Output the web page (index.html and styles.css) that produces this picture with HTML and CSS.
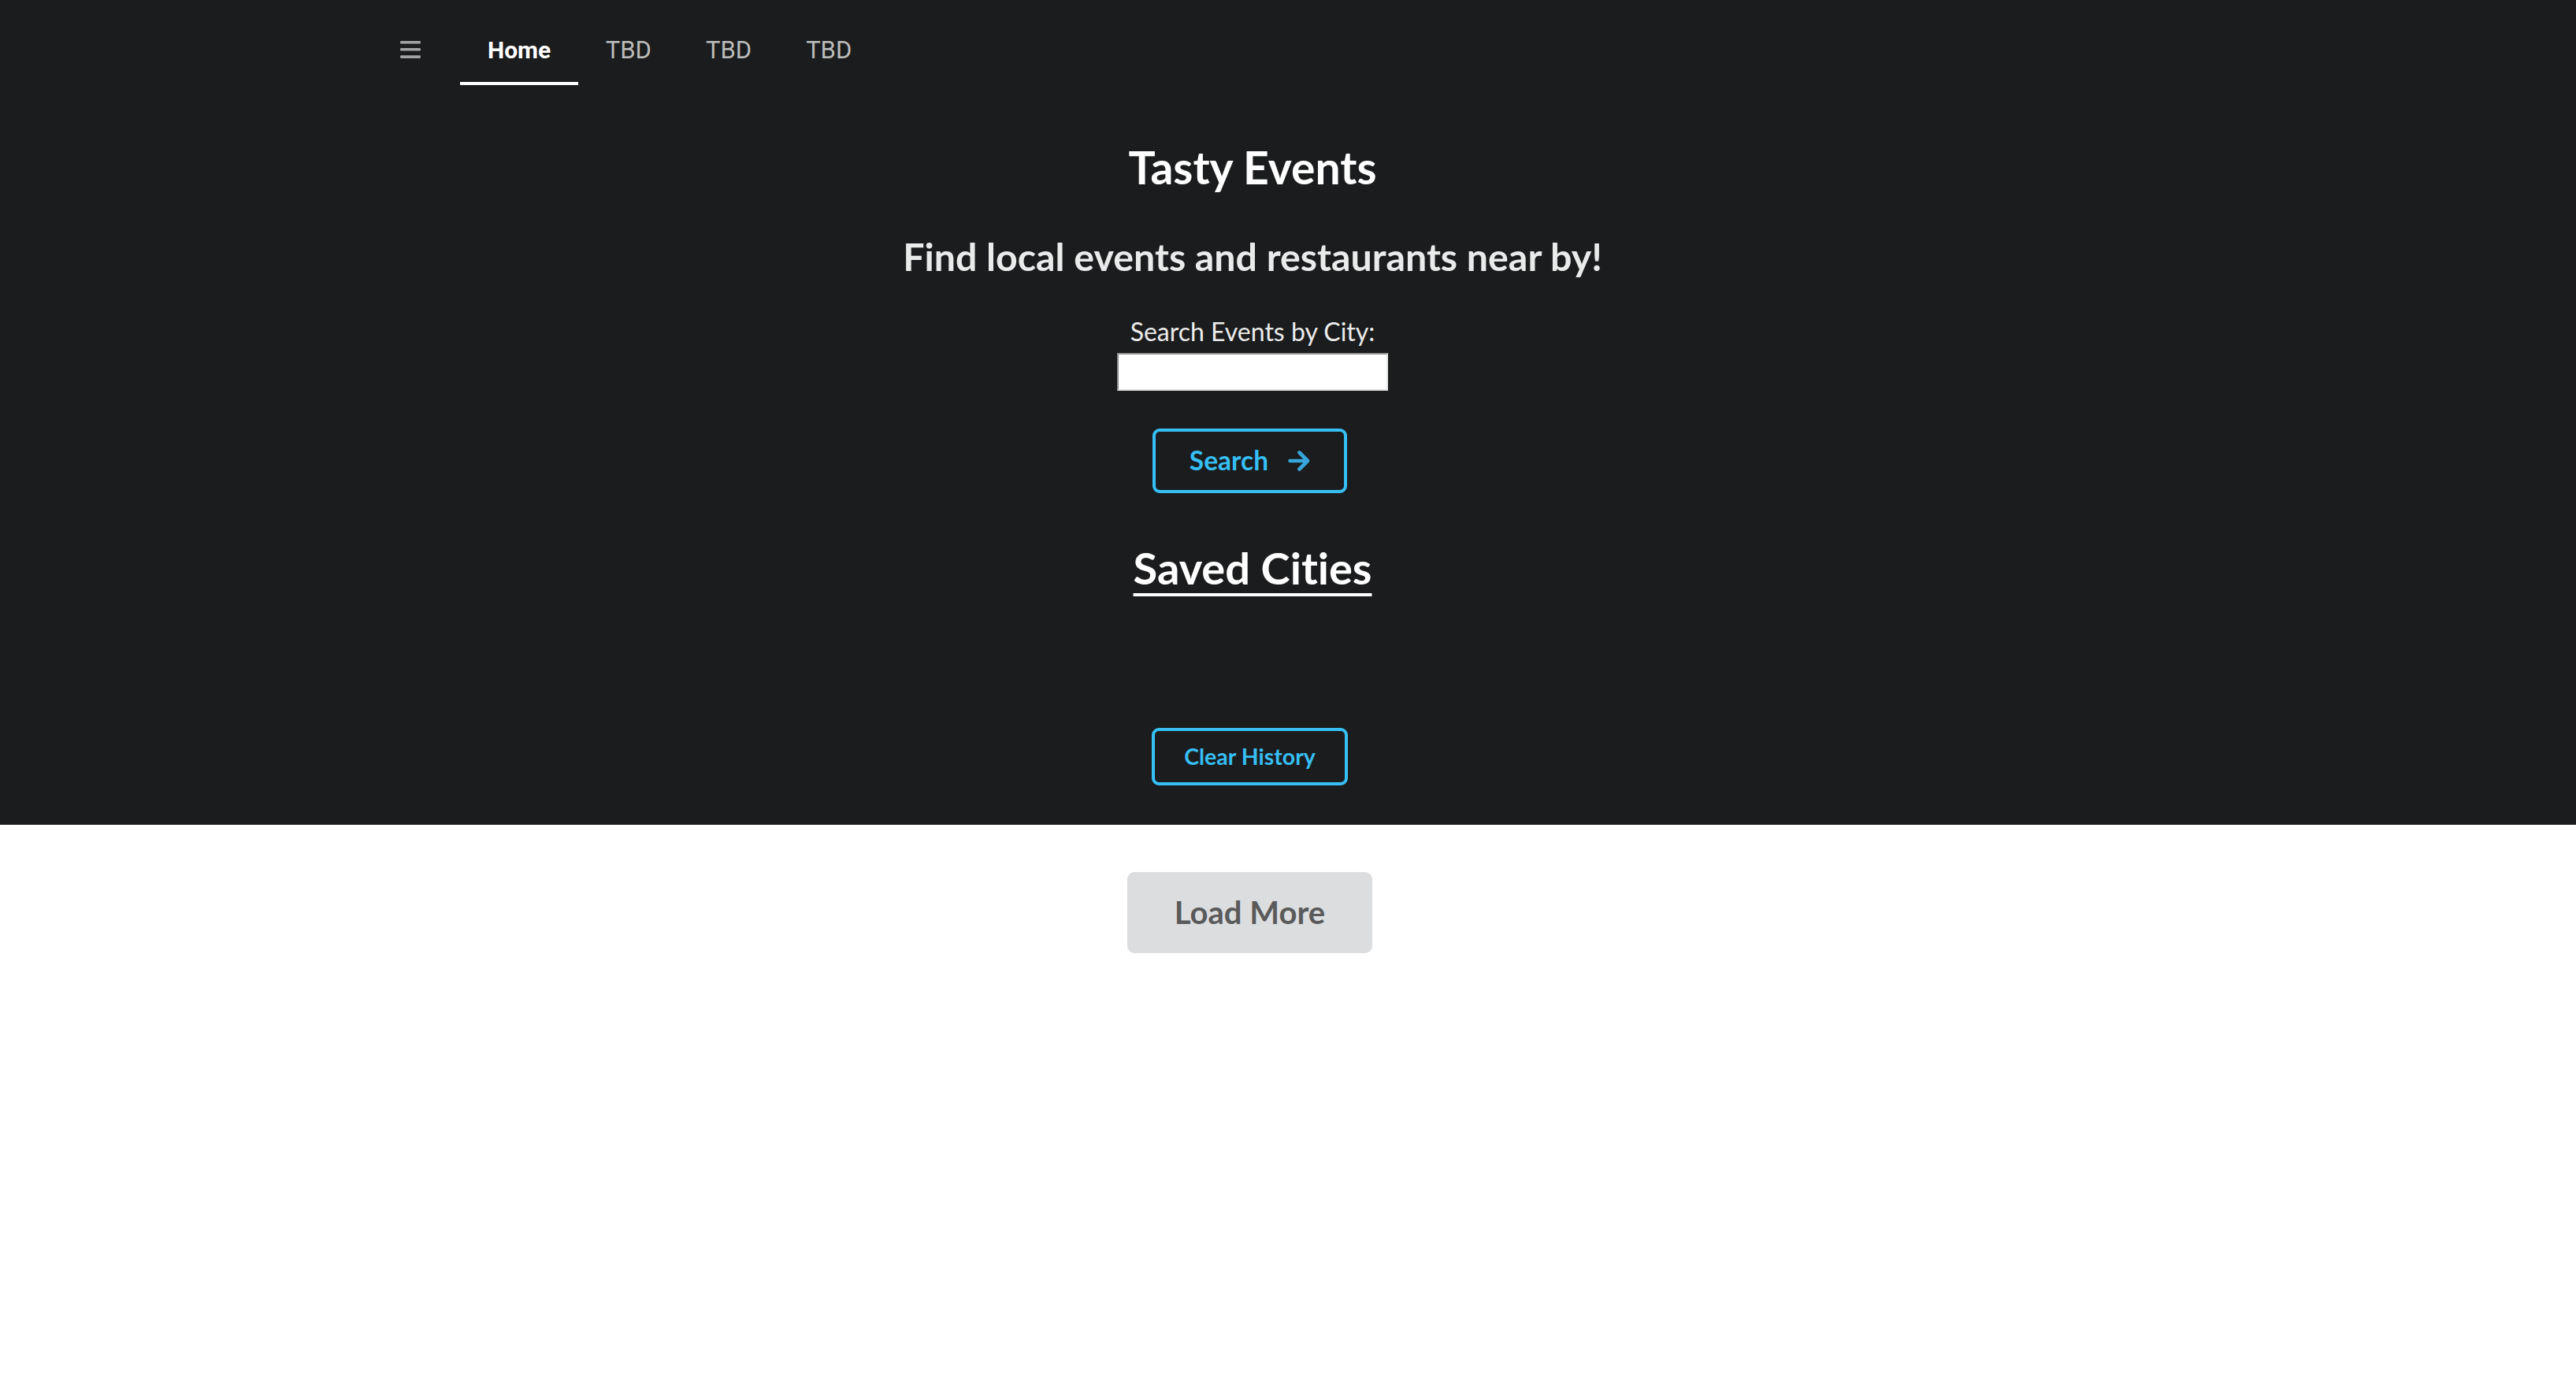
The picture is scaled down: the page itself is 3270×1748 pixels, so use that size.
FILE: index.html
```html
<!DOCTYPE html>
<html lang="en">
<head>
<meta charset="utf-8">
<title>Tasty Events</title>
<link rel="stylesheet" href="styles.css">
</head>
<body>
<section class="hero">
  <div class="hero-inner">
    <nav class="menu">
      <div class="menu-toggle" aria-label="menu">
        <svg width="26" height="22" viewBox="0 0 26 22">
          <rect x="0" y="0" width="26" height="3.6" rx="1.4" fill="#a3a3a3"/>
          <rect x="0" y="9" width="26" height="3.6" rx="1.4" fill="#a3a3a3"/>
          <rect x="0" y="18.2" width="26" height="3.8" rx="1.4" fill="#a3a3a3"/>
        </svg>
      </div>
      <a class="tab active">Home</a>
      <a class="tab">TBD</a>
      <a class="tab">TBD</a>
      <a class="tab">TBD</a>
    </nav>
    <div class="content">
      <h1 class="title">Tasty Events</h1>
      <h2 class="subtitle">Find local events and restaurants near by!</h2>
      <label class="label" for="city">Search Events by City:</label>
      <div class="field"><input id="city" class="city-input" type="text"></div>
      <div class="row search-row">
        <button class="btn-outline btn-search">Search
          <svg class="arrow" width="28" height="26" viewBox="0 0 28 26">
            <path d="M2.5 13 H25 M14.5 2.5 L25 13 L14.5 23.5" fill="none" stroke="#36a6dc" stroke-width="4.6" stroke-linecap="round" stroke-linejoin="round"/>
          </svg>
        </button>
      </div>
      <h3 class="saved">Saved Cities</h3>
      <div class="row clear-row">
        <button class="btn-outline btn-clear">Clear History</button>
      </div>
    </div>
  </div>
</section>
<section class="below">
  <div class="below-inner">
    <button class="btn-load">Load More</button>
  </div>
</section>
</body>
</html>
```

FILE: styles.css
```css
html, body {
  margin: 0;
  padding: 0;
  background: #ffffff;
}

body {
  font-family: Lato, "Open Sans", sans-serif;
  font-variant-ligatures: none;
}

.hero {
  background: #1b1c1d;
  padding-bottom: 50px;
}

.hero-inner {
  padding-right: 90px;
}

.menu {
  width: 2254px;
  margin: 0 auto;
  display: flex;
  align-items: flex-start;
  height: 108px;
  font-family: Roboto, "Liberation Sans", sans-serif;
}

.menu-toggle {
  margin: 52px 50px 0 45px;
  width: 26px;
  height: 22px;
  display: flex;
}

.tab {
  display: block;
  font-size: 31px;
  line-height: 36px;
  padding: 46px 34.5px 22px;
  border-bottom: 4px solid transparent;
  color: #bcbcbc;
  cursor: pointer;
}

.tab.active {
  font-size: 30px;
  color: #ffffff;
  font-weight: 700;
  border-bottom-color: #ffffff;
  padding-left: 35px;
  padding-right: 35px;
}

.content {
  display: flex;
  flex-direction: column;
  align-items: center;
  text-align: center;
}

.title {
  margin: 70px 0 0;
  font-size: 57px;
  line-height: 1.2;
  font-weight: 700;
  color: #ffffff;
}

.subtitle {
  margin: 51px 0 0;
  font-size: 48.3px;
  line-height: 1.2;
  font-weight: 700;
  color: #e9eaea;
}

.label {
  margin-top: 47px;
  font-size: 32px;
  line-height: 1.2;
  color: #ececec;
}

.field {
  margin-top: 7px;
  display: flex;
}

.city-input {
  box-sizing: border-box;
  width: 344px;
  height: 48px;
  margin: 0;
  padding: 2px 4px;
  background: #ffffff;
  border-style: solid;
  border-width: 2px;
  border-color: #8e8e8e #e6e6e6 #e6e6e6 #8e8e8e;
  font-size: 28px;
  font-family: "Liberation Sans", sans-serif;
}

.row {
  display: flex;
  justify-content: center;
}

.search-row {
  margin-top: 48px;
}

.btn-outline {
  display: flex;
  align-items: center;
  background: transparent;
  border: 4px solid #36bff4;
  border-radius: 9px;
  color: #36bff4;
  font-family: Lato, "Open Sans", sans-serif;
  font-weight: 700;
  line-height: 1;
  margin: 0 7px 0 0;
  cursor: pointer;
}

.btn-search {
  font-size: 33.5px;
  padding: 20.5px 43px;
  gap: 25px;
}

.arrow {
  display: block;
}

.saved {
  margin: 61px 0 0;
  font-size: 56px;
  line-height: 1.2;
  font-weight: 700;
  color: #ffffff;
  text-decoration: underline;
  text-decoration-thickness: 3.5px;
  text-underline-offset: 11px;
}

.clear-row {
  margin-top: 170px;
}

.btn-clear {
  font-size: 28.5px;
  padding: 18px 37.5px;
}

.below-inner {
  padding-right: 90px;
  display: flex;
  justify-content: center;
  padding-top: 60px;
}

.btn-load {
  background: #dcdddf;
  color: #5a5a5a;
  border: none;
  border-radius: 9px;
  font-family: Lato, "Open Sans", sans-serif;
  font-weight: 700;
  font-size: 40px;
  line-height: 1;
  padding: 31.5px 60px;
  margin: 0 7px 0 0;
  cursor: pointer;
}
```
